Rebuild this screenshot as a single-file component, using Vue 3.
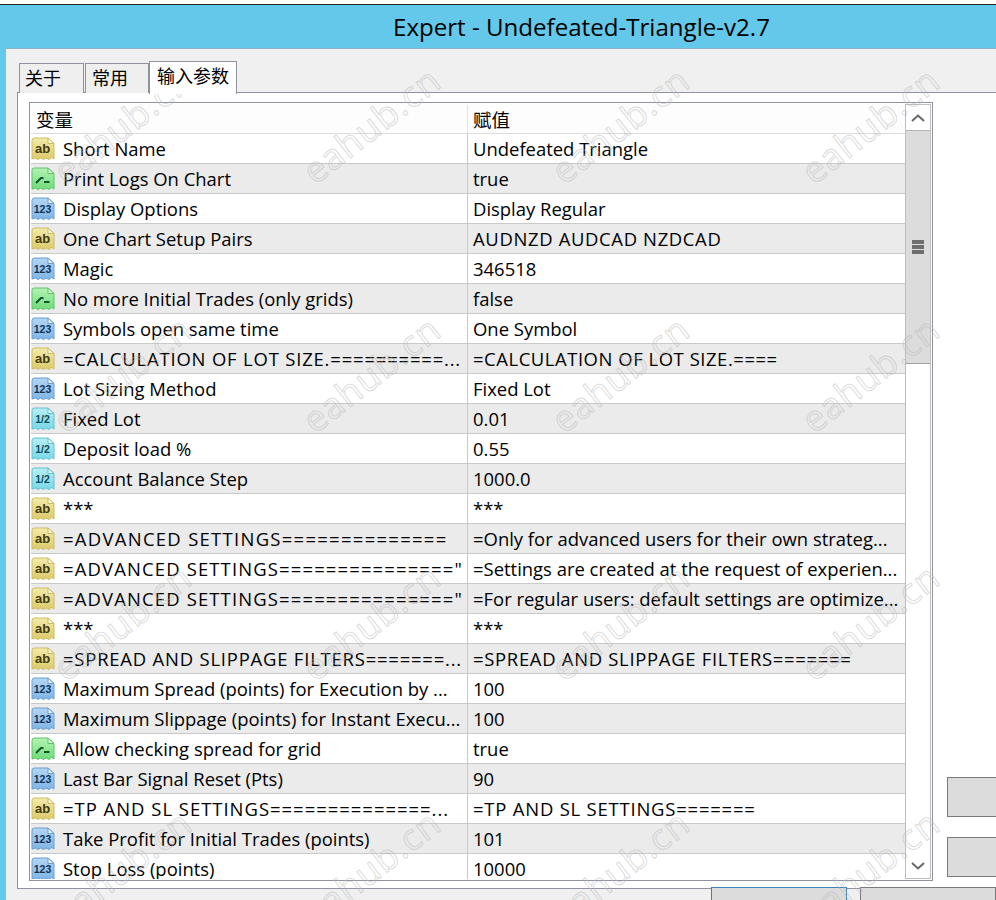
<template>
  <div class="screen">
    <svg class="defs" width="0" height="0">
      <defs>
        <linearGradient v-for="(kind, key) in kinds" :id="'fill-' + key" :key="key" x1="0" y1="0" x2="0" y2="1">
          <stop offset="0" :stop-color="kind.top" />
          <stop offset="1" :stop-color="kind.fill" />
        </linearGradient>
      </defs>
    </svg>
    <div class="window">
      <div class="titlebar">Expert - Undefeated-Triangle-v2.7</div>
      <div class="dialog">
        <div class="tabs">
          <div v-for="tab in tabs" :key="tab" class="tab" :class="{ active: tab === '输入参数' }">{{ tab }}</div>
        </div>
        <div class="panel">
          <div class="table">
            <div class="list">
              <div class="row head">
                <div class="name">变量</div>
                <div class="value">赋值</div>
              </div>
              <div v-for="(row, idx) in rows" :key="idx" class="row" :class="{ alt: idx % 2 === 1 }">
                <div class="name">
                  <svg class="icon" viewBox="0 0 24 24" width="24" height="24">
                    <path
                      d="M1 3.500Q1 1 3.500 1H17L23 6.500V22L20.500 20.500L18 22.500L15 21L12.500 22.500L9.500 21L7 22.500L4.500 21L1 22Z"
                      :fill="'url(#fill-' + row.kind + ')'"
                      :stroke="kinds[row.kind].line"
                    />
                    <path d="M17 1V6.500H23Z" fill="#fff" fill-opacity="0.75" :stroke="kinds[row.kind].line" />
                    <path v-if="row.kind === 'bool'" d="M5 16L10 11H12.500M13 15H18.500" fill="none" stroke="#14532d" stroke-width="2" />
                    <text v-else x="11.500" y="16" text-anchor="middle" class="icon-text" :class="row.kind" :fill="kinds[row.kind].ink">{{ kinds[row.kind].label }}</text>
                  </svg>
                  <span class="label" :style="{ letterSpacing: (row.nameLs || 0) + 'px' }">{{ row.name }}</span>
                </div>
                <div class="value" :style="{ letterSpacing: (row.valueLs || 0) + 'px' }">{{ row.value }}</div>
              </div>
            </div>
            <div class="scrollbar">
              <div class="arrow">
                <svg viewBox="0 0 14 8" width="14" height="8"><path d="M1 7L7 1.500L13 7" fill="none" stroke="#666" stroke-width="2" /></svg>
              </div>
              <div class="thumb"><span class="grip"></span></div>
              <div class="track"></div>
              <div class="arrow down">
                <svg viewBox="0 0 14 8" width="14" height="8"><path d="M1 1L7 6.500L13 1" fill="none" stroke="#666" stroke-width="2" /></svg>
              </div>
            </div>
          </div>
          <div class="side-buttons">
            <div class="side-button"></div>
            <div class="side-button"></div>
          </div>
        </div>
        <div class="footer">
          <div class="button primary"></div>
          <div class="button"></div>
        </div>
      </div>
    </div>
    <div v-for="mark in marks" :key="mark.x + '-' + mark.y" class="watermark" :style="{ left: mark.x + 'px', top: mark.y + 'px' }">eahub.cn</div>
  </div>
</template>

<script setup>
const tabs = ['关于', '常用', '输入参数'];

const kinds = {
  text: { top: '#f4ebaa', fill: '#dcc96a', line: '#cdbd62', ink: '#3f3a10', label: 'ab' },
  bool: { top: '#b4f3b4', fill: '#6fdc78', line: '#5cc465', ink: '#14532d', label: '' },
  int: { top: '#b4d6f4', fill: '#7fb4e6', line: '#6a9fd0', ink: '#0f3358', label: '123' },
  real: { top: '#b6eef4', fill: '#78d8e6', line: '#62c2d0', ink: '#0f4a58', label: '1/2' },
};

const rows = [
  { kind: 'text', name: 'Short Name', value: 'Undefeated Triangle' },
  { kind: 'bool', name: 'Print Logs On Chart', value: 'true' },
  { kind: 'int', name: 'Display Options', value: 'Display Regular' },
  { kind: 'text', name: 'One Chart Setup Pairs', value: 'AUDNZD AUDCAD NZDCAD', valueLs: 0.65 },
  { kind: 'int', name: 'Magic', value: '346518' },
  { kind: 'bool', name: 'No more Initial Trades (only grids)', value: 'false' },
  { kind: 'int', name: 'Symbols open same time', value: 'One Symbol' },
  { kind: 'text', name: '=CALCULATION OF LOT SIZE.==========...', value: '=CALCULATION OF LOT SIZE.====', nameLs: 0.83, valueLs: 0.55 },
  { kind: 'int', name: 'Lot Sizing Method', value: 'Fixed Lot' },
  { kind: 'real', name: 'Fixed Lot', value: '0.01' },
  { kind: 'real', name: 'Deposit load %', value: '0.55' },
  { kind: 'real', name: 'Account Balance Step', value: '1000.0' },
  { kind: 'text', name: '***', value: '***' },
  { kind: 'text', name: '=ADVANCED SETTINGS==============', value: '=Only for advanced users for their own strateg...', nameLs: 1.3 },
  { kind: 'text', name: '=ADVANCED SETTINGS==============="', value: '=Settings are created at the request of experien...', nameLs: 1.15 },
  { kind: 'text', name: '=ADVANCED SETTINGS==============="', value: '=For regular users: default settings are optimize...', nameLs: 1.15 },
  { kind: 'text', name: '***', value: '***' },
  { kind: 'text', name: '=SPREAD AND SLIPPAGE FILTERS=======...', value: '=SPREAD AND SLIPPAGE FILTERS=======', nameLs: 0.8, valueLs: 0.7 },
  { kind: 'int', name: 'Maximum Spread (points) for Execution by ...', value: '100' },
  { kind: 'int', name: 'Maximum Slippage (points) for Instant Execu...', value: '100' },
  { kind: 'bool', name: 'Allow checking spread for grid', value: 'true' },
  { kind: 'int', name: 'Last Bar Signal Reset (Pts)', value: '90' },
  { kind: 'text', name: '=TP AND SL SETTINGS==============...', value: '=TP AND SL SETTINGS=======', nameLs: 1, valueLs: 0.8 },
  { kind: 'int', name: 'Take Profit for Initial Trades (points)', value: '101' },
  { kind: 'int', name: 'Stop Loss (points)', value: '10000' },
];

const marks = [];
for (const y of [125, 374, 622, 868]) {
  for (const x of [122, 371, 620, 870]) marks.push({ x, y });
}
</script>

<style scoped>
.screen {
  position: relative;
  width: 996px;
  height: 900px;
  overflow: hidden;
  background: #fff;
  font-family: "Open Sans", "Noto Sans CJK SC", sans-serif;
  font-size: 18.45px;
  color: #000;
}
.defs { position: absolute; }
.window {
  margin-top: 4px;
  height: 896px;
  border-top: 1px solid #222;
  box-sizing: border-box;
  background: #63c8e9;
}
.titlebar {
  height: 43px;
  padding-left: 393px;
  font-size: 24.1px;
  line-height: 43px;
}
.dialog {
  margin-left: 6px;
  height: 852px;
  border-top: 1px solid #8fb0c0;
  background: #f0f0f0;
  padding-top: 12px;
  box-sizing: border-box;
}
.tabs {
  display: flex;
  height: 31px;
  padding-left: 13px;
}
.tab {
  width: 64px;
  height: 30px;
  margin-top: 2px;
  margin-right: 1px;
  padding-left: 6px;
  border: 1px solid #8f93a0;
  border-bottom: none;
  box-sizing: border-box;
  font-size: 18px;
  line-height: 28px;
  background: #efefef;
}
.tab:first-child { width: 65px; padding-left: 5px; }
.tab.active {
  position: relative;
  z-index: 1;
  width: 88px;
  height: 33px;
  margin: 0 0 -2px -1px;
  padding-left: 7px;
  background: #fff;
}
.panel {
  display: flex;
  align-items: flex-start;
  height: 797px;
  margin-left: 11px;
  border: 1px solid #8f93a0;
  border-right: none;
  box-sizing: border-box;
  background: #fff;
  padding: 9px 0 0 11px;
}
.table {
  display: flex;
  width: 904px;
  height: 779px;
  flex: none;
  padding: 1px;
  border: 1px solid #8f93a0;
  box-sizing: border-box;
  overflow: hidden;
}
.list {
  width: 874px;
  flex: none;
  overflow: hidden;
}
.row {
  display: flex;
  height: 30px;
  padding-top: 1px;
  border-bottom: 1px solid #c9c9c9;
  box-sizing: border-box;
  line-height: 28px;
  white-space: nowrap;
}
.row.head { padding-top: 2px; background: #fdfdfd; border-bottom-color: #dcdcdc; }
.row.alt { background: #ebebeb; }
.name {
  display: flex;
  align-items: center;
  width: 437px;
  margin-top: -1px;
  padding-top: 1px;
  box-sizing: border-box;
  flex: none;
  overflow: hidden;
  border-right: 1px solid #c9c9c9;
}
.head .name { padding-left: 5px; border-right-color: #e4e4e4; }
.value { padding-left: 5px; }
.icon { flex: none; margin-right: 8px; }
.icon-text {
  font-family: "Liberation Sans", sans-serif;
  font-size: 10.500px;
  font-weight: 700;
}
.icon-text.text { font-size: 13px; }
.scrollbar {
  display: flex;
  flex-direction: column;
  width: 26px;
  flex: none;
  border: 1px solid #bdbdbd;
  box-sizing: border-box;
}
.arrow {
  display: flex;
  align-items: center;
  justify-content: center;
  height: 25px;
  flex: none;
  border-bottom: 1px solid #b5b5b5;
}
.arrow.down { border-bottom: none; }
.thumb {
  display: flex;
  align-items: center;
  justify-content: center;
  height: 233px;
  flex: none;
  border-bottom: 1px solid #a0a0a0;
  box-sizing: border-box;
  background: #dcdcdc;
}
.grip {
  width: 12px;
  height: 14px;
  background: repeating-linear-gradient(#6e6e6e 0 4px, transparent 4px 5px);
}
.track { flex: 1; }
.side-buttons {
  display: flex;
  flex-direction: column;
  gap: 20px;
  margin: 675px 0 0 14px;
}
.side-button {
  width: 60px;
  height: 40px;
  border: 1px solid #7a7a7a;
  box-sizing: border-box;
  background: #dcdcdc;
}
.footer {
  display: flex;
  justify-content: flex-end;
  gap: 13px;
  margin-top: -2px;
}
.button {
  width: 136px;
  height: 30px;
  border: 1px solid #7a7a7a;
  box-sizing: border-box;
  background: #dcdcdc;
}
.button.primary { border-color: #3c82b8; }
.watermark {
  position: absolute;
  transform: translate(-50%, -50%) rotate(-38deg);
  font-family: "Open Sans", sans-serif;
  font-size: 36px;
  letter-spacing: 1px;
  color: transparent;
  -webkit-text-stroke: 1px rgba(185, 185, 185, 0.5);
  pointer-events: none;
}
</style>
